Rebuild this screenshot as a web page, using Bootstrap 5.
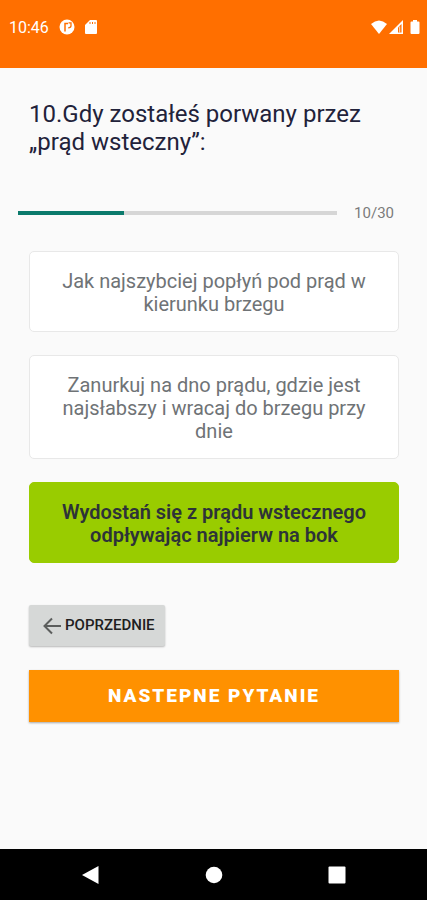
<!DOCTYPE html>
<html lang="pl">
<head>
<meta charset="utf-8">
<meta name="viewport" content="width=device-width, initial-scale=1">
<title>Quiz</title>
<link href="https://cdn.jsdelivr.net/npm/bootstrap@5.3.0/dist/css/bootstrap.min.css" rel="stylesheet">
<style>
  body { font-family: Roboto, sans-serif; background: #fafafa; }
  .status-bar { background: #ff6f00; height: 68px; padding: 18px 6px 0 9px; }
  .clock { font-size: 16px; line-height: 20px; margin-right: 10px; }
  .quiz { padding: 32px 28px 0 29px; }
  .question { font-size: 24px; line-height: 28px; font-weight: 400; color: #22223a; margin: 0 0 48px; }
  .meter { margin: 0 5px 29px -11px; gap: 17px; }
  .meter .progress { height: 4px; background: #d6d6d6; border-radius: 0; }
  .meter .progress-bar { background: #0b7a6c; }
  .count { font-size: 15px; line-height: 18px; color: #7b7b7b; }
  .answer { --bs-btn-color: #6f7376; --bs-btn-bg: #fff; --bs-btn-border-color: #e8e8e8;
    --bs-btn-font-size: 20px; --bs-btn-border-radius: 5px; line-height: 23px; padding: 18px 28px 15px; }
  .answer-right { --bs-btn-color: #2d3338; --bs-btn-bg: #99cc00; --bs-btn-border-color: #99cc00; font-weight: 600; }
  .answers { gap: 23px; margin-bottom: 42px; }
  .prev { --bs-btn-color: #202020; --bs-btn-bg: #d6d8d7; --bs-btn-font-size: 15px; --bs-btn-border-radius: 2px;
    height: 41px; padding: 0 9px 0 12px; gap: 3px; margin-bottom: 24px; font-weight: 500; box-shadow: 0 1px 2px #0004; }
  .next { --bs-btn-color: #fff; --bs-btn-bg: #ff9100; --bs-btn-font-size: 19px; --bs-btn-border-radius: 0;
    height: 52px; padding: 0; font-weight: 900; letter-spacing: 2px; box-shadow: 0 1px 2px #0005; }
  .system-nav { background: #000; height: 51px; padding: 0 28px; }
  .system-nav .btn { padding: 0; line-height: 0; width: 123px; }
</style>
<script src="https://cdn.jsdelivr.net/npm/bootstrap@5.3.0/dist/js/bootstrap.bundle.min.js"></script>
</head>
<body class="d-flex flex-column min-vh-100">
<header class="status-bar d-flex align-items-start text-white">
  <span class="clock">10:46</span>
  <svg width="40" height="18" viewBox="0 0 40 18" fill="#fff" aria-hidden="true">
    <circle cx="8" cy="9" r="7.500"/>
    <path d="M6 13.500V5.500H9" fill="none" stroke="#ff6f00" stroke-width="1.500"/>
    <path d="M9.500 4.800h2.500v3q0 2-2.800 2" fill="none" stroke="#ff6f00" stroke-width="1.300"/>
    <path d="M31 2h6q1 0 1 1v12q0 1-1 1H27q-1 0-1-1V7z"/>
    <path d="M31 4v2M33.500 4v2M36 4v2" stroke="#ff6f00" stroke-width="1"/>
  </svg>
  <svg class="ms-auto" width="50" height="18" viewBox="0 0 50 18" fill="#fff" aria-hidden="true">
    <path d="M0 6Q8-1 16 6L8 16z"/>
    <path d="M32 2V16H18z"/>
    <path d="M27 9.500V14.500h3.500V6z" fill="#ff6f00"/>
    <path d="M28.700 8.500v6" stroke="#fff" stroke-width=".8"/>
    <path d="M42 2h4v1.500h1.500q1 0 1 1V15q0 1-1 1h-7q-1 0-1-1V4.500q0-1 1-1H42z"/>
  </svg>
</header>
<main class="quiz flex-grow-1">
  <h1 class="question">10.Gdy zostałeś porwany przez „prąd wsteczny”:</h1>
  <div class="meter d-flex align-items-center">
    <div class="progress flex-grow-1" role="progressbar" aria-label="Postęp" aria-valuenow="10" aria-valuemin="0" aria-valuemax="30">
      <div class="progress-bar" style="width: 33.33%"></div>
    </div>
    <span class="count">10/30</span>
  </div>
  <div class="answers d-grid">
    <button type="button" class="btn answer">Jak najszybciej popłyń pod prąd w kierunku brzegu</button>
    <button type="button" class="btn answer">Zanurkuj na dno prądu, gdzie jest najsłabszy i wracaj do brzegu przy dnie</button>
    <button type="button" class="btn answer answer-right">Wydostań się z prądu wstecznego odpływając najpierw na bok</button>
  </div>
  <button type="button" class="btn prev d-flex align-items-center">
    <svg width="20" height="18" viewBox="0 0 20 18" fill="none" stroke="#5c5e5d" stroke-width="2" aria-hidden="true"><path d="M19 9H2.500M10 1.500L2.500 9l7.500 7.500"/></svg>
    POPRZEDNIE
  </button>
  <button type="button" class="btn next w-100">NASTEPNE PYTANIE</button>
</main>
<nav class="system-nav d-flex justify-content-center align-items-center" aria-label="System">
  <button type="button" class="btn" aria-label="Wstecz"><svg width="18" height="20" viewBox="0 0 18 20" fill="#fff"><path d="M0 10L16.500 1V19z"/></svg></button>
  <button type="button" class="btn" aria-label="Ekran główny"><svg width="18" height="18" viewBox="0 0 18 18" fill="#fff"><circle cx="9" cy="9" r="8.300"/></svg></button>
  <button type="button" class="btn" aria-label="Ostatnie"><svg width="18" height="18" viewBox="0 0 18 18" fill="#fff"><rect x=".5" y=".5" width="17" height="17" rx="1"/></svg></button>
</nav>
</body>
</html>
